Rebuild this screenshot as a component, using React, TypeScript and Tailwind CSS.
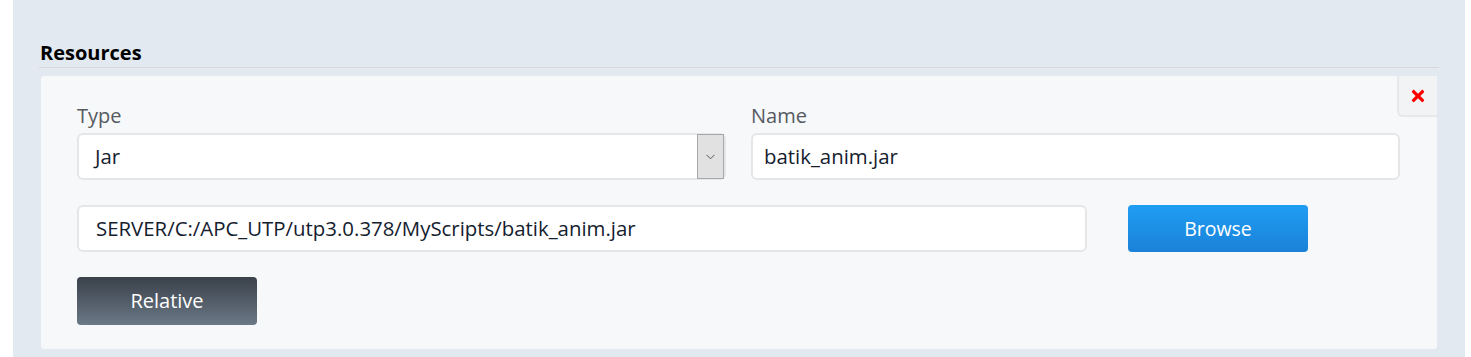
import { FaTimes } from 'react-icons/fa'

const font = { fontFamily: '"Open Sans", "Noto Sans", sans-serif' }

function Field({ value, className = '' }: { value: string; className?: string }) {
  return (
    <div
      className={`flex h-[47px] items-center rounded-md border-2 border-[#e5e6e8] bg-white text-[20.4px] text-[#14202e] ${className}`}
    >
      {value}
    </div>
  )
}

export default function App() {
  return (
    <div className="flex h-[357px] w-full bg-white" style={font}>
      <div className="ml-[13px] w-[1452px] bg-[#e3e9f1] pl-[26px] pr-[26px] pt-[40px]">
        <h2 className="pl-px text-[20px] font-bold leading-[26px] text-black">Resources</h2>
        <div className="mt-px h-px w-[1400px] bg-[#dad6de]" />

        {/* Resource card */}
        <div className="relative ml-[2px] mt-[8px] h-[273px] w-[1396px] rounded-[3px] bg-[#f7f8fa] pl-[36px] pr-[37px] pt-[28px]">
          <button className="absolute right-0 top-0 flex h-[41px] w-[40px] items-center justify-center rounded-bl-md border-b-2 border-l-2 border-[#e6e8ec] bg-[#f2f3f5]">
            <FaTimes size={18} className="text-[#ff0000]" />
          </button>

          <div className="grid grid-cols-2 gap-x-[25px]">
            <div>
              <div className="text-[20px] leading-[24px] text-[#555a60]">Type</div>
              <div className="relative mt-[5px]">
                <Field value="Jar" className="pl-[16px]" />
                <div className="absolute right-[2px] top-[1px] flex h-[45px] w-[27px] items-center justify-center border border-[#a8a8a8] bg-[#e1e1e1]">
                  <svg width="9" height="6" viewBox="0 0 9 6" fill="none">
                    <path d="M0.5 0.8 L4.5 4.8 L8.5 0.8" stroke="#555" strokeWidth="1" />
                  </svg>
                </div>
              </div>
            </div>
            <div>
              <div className="text-[20px] leading-[24px] text-[#555a60]">Name</div>
              <div className="mt-[5px]">
                <Field value="batik_anim.jar" className="pl-[11px]" />
              </div>
            </div>
          </div>

          <div className="mt-[25px] flex items-center gap-[41px]">
            <Field value="SERVER/C:/APC_UTP/utp3.0.378/MyScripts/batik_anim.jar" className="w-[1010px] pl-[17px]" />
            <button className="h-[47px] w-[180px] rounded-[4px] bg-gradient-to-b from-[#1f9df3] to-[#1a82d8] text-[19.5px] text-white">
              Browse
            </button>
          </div>

          <button className="mt-[25px] h-[48px] w-[180px] rounded-[4px] bg-gradient-to-b from-[#3a414b] to-[#6b7986] text-[20px] text-white">
            Relative
          </button>
        </div>
      </div>
    </div>
  )
}
